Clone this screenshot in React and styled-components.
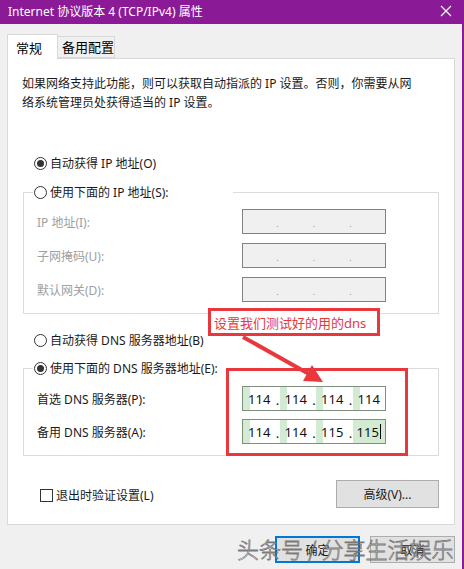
import React from 'react';
import styled, { createGlobalStyle } from 'styled-components';

const FONT = '"Noto Sans", "Noto Sans CJK SC", sans-serif';
const RED = '#e8383d';

const GlobalStyle = createGlobalStyle`
  html, body {
    margin: 0;
    padding: 0;
    background: #f0f0f0;
  }
  * {
    box-sizing: border-box;
  }
`;

const Window = styled.div`
  position: relative;
  width: 464px;
  height: 569px;
  background: #f0f0f0;
  border-right: 2px solid #8b1a97;
  font-family: ${FONT};
  font-size: 12px;
  color: #1a1a1a;
  overflow: hidden;
`;

const TitleBar = styled.div`
  height: 24px;
  background: #8b1a97;
  color: #fff;
  display: flex;
  align-items: center;
  justify-content: space-between;
  padding: 0 8px 2px 8px;
  font-size: 12px;
`;

const Body = styled.div`
  padding: 10px 7px 0 7px;
`;

const Tabs = styled.div`
  display: flex;
  align-items: flex-end;
  height: 24px;
`;

const Tab = styled.div`
  position: relative;
  z-index: 1;
  height: ${(p) => (p.$active ? '25px' : '22px')};
  margin-bottom: ${(p) => (p.$active ? '-1px' : '0')};
  width: ${(p) => p.$w}px;
  margin-left: ${(p) => (p.$active ? '0' : '-1px')};
  background: ${(p) => (p.$active ? '#fff' : '#f0f0f0')};
  border: 1px solid #d9d9d9;
  border-bottom: ${(p) => (p.$active ? 'none' : '1px solid #d9d9d9')};
  padding: ${(p) => (p.$active ? '2px 0 0 8px' : '0 0 0 4px')};
  display: flex;
  align-items: center;
  font-size: 13px;
  line-height: 1;
  white-space: nowrap;
  color: #000;
`;

const Panel = styled.div`
  background: #fff;
  border: 1px solid #d9d9d9;
  padding: 15px 15px 16px 14px;
  display: flex;
  flex-direction: column;
`;

const Desc = styled.p`
  margin: 0;
  line-height: 19px;
  white-space: pre-line;
  color: #1a1a1a;
`;

const RadioRow = styled.div`
  display: flex;
  align-items: center;
  height: 20px;
  margin-top: ${(p) => p.$mt || 0}px;
  margin-left: 12px;
  color: #1a1a1a;
`;

const RadioMark = styled.span`
  position: relative;
  width: 13px;
  height: 13px;
  border: 1px solid #333;
  border-radius: 50%;
  margin-right: 3px;
  flex: none;
  background: #fff;

  &::after {
    content: '';
    display: ${(p) => (p.$checked ? 'block' : 'none')};
    position: absolute;
    left: 2px;
    top: 2px;
    width: 7px;
    height: 7px;
    border-radius: 50%;
    background: #333;
  }
`;

const Group = styled.fieldset`
  margin: ${(p) => p.$mt}px 0 0 1px;
  padding: ${(p) => p.$pt}px 0 11px 13px;
  border: 1px solid #dcdcdc;
  min-width: 0;
`;

const Legend = styled.legend`
  display: flex;
  align-items: center;
  height: 20px;
  width: 200px;
  margin-left: -4px;
  padding: 0 1px;
  color: #1a1a1a;
`;

const Rows = styled.div`
  display: flex;
  flex-direction: column;
  gap: ${(p) => p.$gap}px;
`;

const FieldRow = styled.div`
  display: grid;
  grid-template-columns: 205px 144px;
  align-items: center;
  height: 25px;
`;

const Label = styled.span`
  color: ${(p) => (p.$disabled ? '#a0a0a0' : '#1a1a1a')};
`;

const IpBox = styled.div`
  display: flex;
  align-items: stretch;
  height: 25px;
  border: 1px solid ${(p) => (p.$disabled ? '#7d857d' : '#7f8f7f')};
  background: ${(p) => (p.$disabled ? '#f0f0f0' : '#fff')};
  font-size: 13px;
`;

const Segment = styled.span`
  position: relative;
  flex: 1;
  display: flex;
  align-items: center;
  justify-content: center;
  color: #111;
  background: ${(p) =>
    p.$full
      ? '#d3ead3'
      : p.$disabled
      ? 'transparent'
      : 'linear-gradient(to right, #d3ead3 0 7px, #fff 7px)'};
`;

const Dot = styled.span`
  width: 4px;
  display: flex;
  align-items: center;
  justify-content: center;
  color: ${(p) => (p.$disabled ? '#9a9a9a' : '#111')};
  font-size: ${(p) => (p.$disabled ? '9px' : '13px')};
  padding-top: 3px;
`;

const Caret = styled.span`
  display: inline-block;
  width: 1px;
  height: 15px;
  background: #000;
  margin-left: 1px;
`;

const BottomRow = styled.div`
  display: flex;
  align-items: center;
  justify-content: space-between;
  margin-top: 24px;
  height: 28px;
`;

const Check = styled.label`
  display: flex;
  align-items: center;
  margin-left: 18px;
  margin-top: 2px;
  color: #1a1a1a;
`;

const CheckBox = styled.span`
  width: 13px;
  height: 13px;
  border: 1px solid #333;
  background: #fff;
  margin-right: 3px;
`;

const Button = styled.button`
  width: ${(p) => p.$w}px;
  height: ${(p) => p.$h}px;
  background: #e1e1e1;
  border: ${(p) => (p.$primary ? '2px solid #0078d7' : '1px solid #adadad')};
  font-family: ${FONT};
  font-size: 12px;
  color: #1a1a1a;
  padding: 0;
`;

const Footer = styled.div`
  display: flex;
  justify-content: flex-end;
  gap: 10px;
  margin-top: 11px;
`;

const Note = styled.div`
  position: absolute;
  left: 208px;
  top: 308px;
  width: 172px;
  height: 28px;
  border: 3px solid ${RED};
  background: #fff;
  color: ${RED};
  font-size: 13px;
  display: flex;
  align-items: center;
  padding-left: 3px;
`;

const Highlight = styled.div`
  position: absolute;
  left: 226px;
  top: 368px;
  width: 182px;
  height: 88px;
  border: 3px solid ${RED};
  pointer-events: none;
`;

const Arrow = styled.svg`
  position: absolute;
  left: 0;
  top: 0;
  pointer-events: none;
`;

const Watermark = styled.div`
  position: absolute;
  left: 237px;
  top: 534px;
  font-family: "Noto Sans CJK SC", sans-serif;
  font-weight: 300;
  font-size: 22px;
  line-height: 28px;
  color: rgba(255, 255, 255, 0.75);
  -webkit-text-stroke: 0.8px rgba(80, 80, 80, 0.75);
  white-space: nowrap;
  pointer-events: none;
`;

const Radio = ({ checked, children, mt }) => (
  <RadioRow $mt={mt}>
    <RadioMark $checked={checked} />
    {children}
  </RadioRow>
);

const IpField = ({ values, disabled, fullLast, caret }) => (
  <IpBox $disabled={disabled}>
    {values.map((v, i) => (
      <React.Fragment key={i}>
        {i > 0 && <Dot $disabled={disabled}>.</Dot>}
        <Segment $disabled={disabled} $full={fullLast && i === 3}>
          {v}
          {caret && i === 3 && <Caret />}
        </Segment>
      </React.Fragment>
    ))}
  </IpBox>
);

const empty = ['', '', '', ''];

const App = () => {
  return (
    <Window>
      <GlobalStyle />
      <TitleBar>
        <span>Internet 协议版本 4 (TCP/IPv4) 属性</span>
        <svg width="12" height="12" viewBox="0 0 12 12" style={{ marginRight: 2 }}>
          <path d="M1 1 L11 11 M11 1 L1 11" stroke="#fff" strokeWidth="1.2" />
        </svg>
      </TitleBar>
      <Body>
        <Tabs>
          <Tab $active $w={51}>常规</Tab>
          <Tab $w={58}>备用配置</Tab>
        </Tabs>
        <Panel>
          <Desc>
            {'如果网络支持此功能，则可以获取自动指派的 IP 设置。否则，你需要从网\n络系统管理员处获得适当的 IP 设置。'}
          </Desc>
          <Radio checked mt={41}>自动获得 IP 地址(O)</Radio>
          <Group $mt={9} $pt={7}>
            <Legend>
              <RadioMark />
              使用下面的 IP 地址(S):
            </Legend>
            <Rows $gap={9}>
              <FieldRow>
                <Label $disabled>IP 地址(I):</Label>
                <IpField values={empty} disabled />
              </FieldRow>
              <FieldRow>
                <Label $disabled>子网掩码(U):</Label>
                <IpField values={empty} disabled />
              </FieldRow>
              <FieldRow>
                <Label $disabled>默认网关(D):</Label>
                <IpField values={empty} disabled />
              </FieldRow>
            </Rows>
          </Group>
          <Radio mt={16}>自动获得 DNS 服务器地址(B)</Radio>
          <Group $mt={8} $pt={8}>
            <Legend>
              <RadioMark $checked />
              使用下面的 DNS 服务器地址(E):
            </Legend>
            <Rows $gap={8}>
              <FieldRow>
                <Label>首选 DNS 服务器(P):</Label>
                <IpField values={['114', '114', '114', '114']} />
              </FieldRow>
              <FieldRow>
                <Label>备用 DNS 服务器(A):</Label>
                <IpField values={['114', '114', '115', '115']} fullLast caret />
              </FieldRow>
            </Rows>
          </Group>
          <BottomRow>
            <Check>
              <CheckBox />
              退出时验证设置(L)
            </Check>
            <Button $w={103} $h={28}>高级(V)...</Button>
          </BottomRow>
        </Panel>
        <Footer>
          <Button $primary $w={85} $h={27}>确定</Button>
          <Button $w={85} $h={27}>取消</Button>
        </Footer>
      </Body>

      <Note>设置我们测试好的用的dns</Note>
      <Highlight />
      <Arrow width="464" height="569">
        <line x1="243" y1="337" x2="309" y2="374" stroke={RED} strokeWidth="4" />
        <polygon points="323,382 303,381 312,365" fill={RED} />
      </Arrow>
      <Watermark>头条号 / 分享生活娱乐</Watermark>
    </Window>
  );
};

export default App;
